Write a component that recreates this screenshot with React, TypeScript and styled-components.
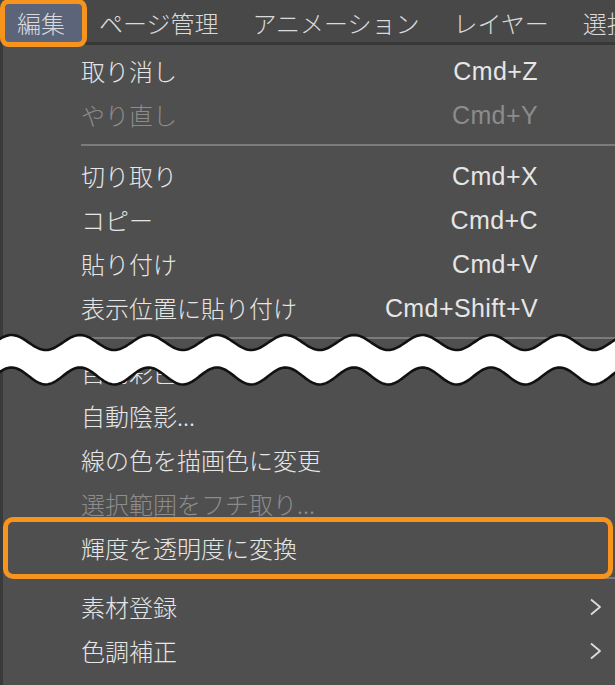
import React, { FC } from 'react'
import styled, { createGlobalStyle } from 'styled-components'

const GlobalStyle = createGlobalStyle`
  html, body {
    margin: 0;
    padding: 0;
    background: #4f4f4f;
    overflow: hidden;
  }
  #root {
    width: 615px;
    height: 685px;
  }
`

const JP = `"Noto Sans CJK JP", "Noto Sans", sans-serif`
const ORANGE = '#f7941d'

type Entry =
  | { kind: 'item'; label: string; shortcut?: string; disabled?: boolean; submenu?: boolean; boxed?: boolean }
  | { kind: 'sep'; height?: number }

const entries: Entry[] = [
  { kind: 'item', label: '取り消し', shortcut: 'Cmd+Z' },
  { kind: 'item', label: 'やり直し', shortcut: 'Cmd+Y', disabled: true },
  { kind: 'sep' },
  { kind: 'item', label: '切り取り', shortcut: 'Cmd+X' },
  { kind: 'item', label: 'コピー', shortcut: 'Cmd+C' },
  { kind: 'item', label: '貼り付け', shortcut: 'Cmd+V' },
  { kind: 'item', label: '表示位置に貼り付け', shortcut: 'Cmd+Shift+V' },
  { kind: 'sep', height: 20 },
  { kind: 'item', label: '自動彩色' },
  { kind: 'item', label: '自動陰影...' },
  { kind: 'item', label: '線の色を描画色に変更' },
  { kind: 'item', label: '選択範囲をフチ取り...', disabled: true },
  { kind: 'item', label: '輝度を透明度に変換', boxed: true },
  { kind: 'sep', height: 15 },
  { kind: 'item', label: '素材登録', submenu: true },
  { kind: 'item', label: '色調補正', submenu: true }
]

const titles = ['編集', 'ページ管理', 'アニメーション', 'レイヤー', '選択範囲']

// sine edge of the torn "cut" band, computed once
const wave = (c: number, a: number, reverse = false) => {
  const pts: string[] = []
  for (let x = -4; x <= 620; x += 2) {
    const y = c - a * Math.cos((2 * Math.PI * (x - 80)) / 68.5)
    pts.push(`${x},${y.toFixed(2)}`)
  }
  return reverse ? pts.reverse() : pts
}
const topEdge = wave(17.5, 7.5)
const bottomEdge = wave(51, 8.5)

const Chevron: FC = () => (
  <svg width="13" height="18" viewBox="0 0 13 18">
    <polyline points="2,1.5 11,9 2,16.5" fill="none" stroke="#dcdcdc" strokeWidth="1.8" strokeLinejoin="round" />
  </svg>
)

export default function App() {
  return (
    <>
      <GlobalStyle />
      <Screen>
        <MenuBar>
          {titles.map((t, i) => (
            <Title key={t} $active={i === 0}>
              {t}
            </Title>
          ))}
        </MenuBar>
        <Menu>
          {entries.map((e, i) =>
            e.kind === 'sep' ? (
              <Separator key={i} $height={e.height ?? 17} />
            ) : (
              <Row key={i} $boxed={e.boxed}>
                <Label $disabled={e.disabled}>{e.label}</Label>
                <Shortcut $disabled={e.disabled}>{e.shortcut}</Shortcut>
                <Arrow>{e.submenu && <Chevron />}</Arrow>
              </Row>
            )
          )}
          <Cut width="615" height="66" viewBox="0 0 615 66">
            <polygon points={[...topEdge, ...wave(51, 8.5, true)].join(' ')} fill="#fff" />
            <polyline points={topEdge.join(' ')} fill="none" stroke="#111" strokeWidth="2.6" />
            <polyline points={bottomEdge.join(' ')} fill="none" stroke="#111" strokeWidth="2.6" />
          </Cut>
        </Menu>
      </Screen>
    </>
  )
}

const Screen = styled.div`
  width: 615px;
  height: 685px;
  display: flex;
  flex-direction: column;
  overflow: hidden;
  background: #4f4f4f;
`

const MenuBar = styled.div`
  position: relative;
  z-index: 3;
  height: 45px;
  flex: none;
  display: flex;
  align-items: stretch;
  padding-top: 4px;
  box-sizing: border-box;
  background: #484848;
  border-bottom: 3px solid #383838;
  white-space: nowrap;
`

const Title = styled.div<{ $active?: boolean }>`
  display: flex;
  align-items: center;
  padding: 0 17px;
  font-family: ${JP};
  font-size: 24px;
  font-weight: 300;
  color: #dadada;
  line-height: 1;
  background: ${p => (p.$active ? '#5b6479' : 'transparent')};
  border-radius: 4px;
  box-shadow: ${p => (p.$active ? `0 0 0 5px ${ORANGE}` : 'none')};

  &:first-child {
    margin-left: 5px;
    padding: 0 17px 0 12px;
  }
`

const Menu = styled.div`
  position: relative;
  flex: 1;
  padding-top: 4px;
  border-left: 3px solid #3a3a3a;
`

const Row = styled.div<{ $boxed?: boolean }>`
  position: relative;
  height: 44px;
  display: grid;
  grid-template-columns: 1fr auto 77px;
  align-items: center;
  padding-left: 78px;

  ${p =>
    p.$boxed &&
    `
    &::after {
      content: '';
      position: absolute;
      left: 0;
      right: 2px;
      top: -9px;
      bottom: -9px;
      border: 5px solid ${ORANGE};
      border-radius: 10px;
      z-index: 2;
    }
  `}
`

const Label = styled.span<{ $disabled?: boolean }>`
  font-family: ${JP};
  font-size: 24px;
  font-weight: 300;
  line-height: 1;
  color: ${p => (p.$disabled ? '#8c8c8c' : '#e6e6e6')};
`

const Shortcut = styled.span<{ $disabled?: boolean }>`
  font-family: 'Liberation Sans', Arial, sans-serif;
  font-size: 25px;
  letter-spacing: 0.4px;
  line-height: 1;
  color: ${p => (p.$disabled ? '#8c8c8c' : '#e6e6e6')};
`

const Arrow = styled.span`
  display: flex;
  align-items: center;
  padding-left: 51px;
`

const Separator = styled.div<{ $height: number }>`
  position: relative;
  height: ${p => p.$height}px;
  margin-left: 78px;

  &::before {
    content: '';
    position: absolute;
    left: 0;
    right: 0;
    top: 7px;
    height: 2px;
    background: #7b7b7b;
  }
`

const Cut = styled.svg`
  position: absolute;
  left: -3px;
  top: 280px;
  z-index: 4;
  display: block;
`
